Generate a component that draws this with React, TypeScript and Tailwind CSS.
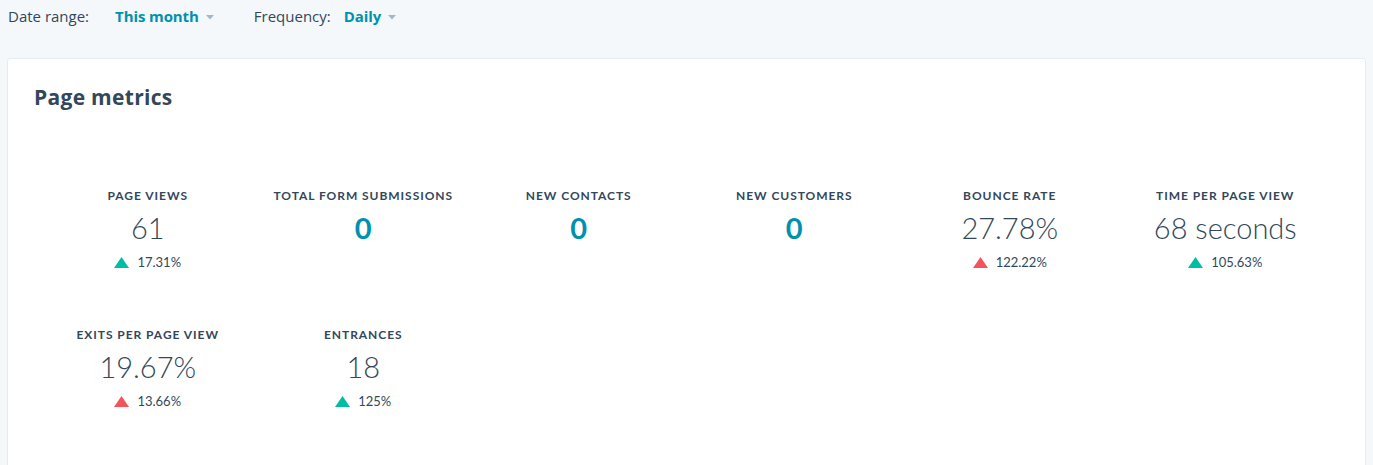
import { ReactNode } from 'react';

type Metric = {
  label: string;
  value: string;
  zero?: boolean;
  change?: string;
  up?: 'good' | 'bad';
};

const metrics: Metric[] = [
  { label: 'Page views', value: '61', change: '17.31%', up: 'good' },
  { label: 'Total form submissions', value: '0', zero: true },
  { label: 'New contacts', value: '0', zero: true },
  { label: 'New customers', value: '0', zero: true },
  { label: 'Bounce rate', value: '27.78%', change: '122.22%', up: 'bad' },
  { label: 'Time per page view', value: '68 seconds', change: '105.63%', up: 'good' },
  { label: 'Exits per page view', value: '19.67%', change: '13.66%', up: 'bad' },
  { label: 'Entrances', value: '18', change: '125%', up: 'good' },
];

function Caret() {
  return (
    <svg width="8" height="5" viewBox="0 0 8 5" className="ml-[7px] mt-[1px]">
      <path d="M0 0h8L4 4.5z" fill="#a6b6c6" />
    </svg>
  );
}

function Filter({ label, value, gap }: { label: string; value: string; gap: string }) {
  return (
    <div className={`flex items-center ${gap}`}>
      <span className="text-[#33475b]">{label}</span>
      <span className="flex items-center font-bold tracking-[-0.1px] text-[#0091ae]">
        {value}
        <Caret />
      </span>
    </div>
  );
}

function Triangle({ color }: { color: string }) {
  return (
    <svg width="15" height="11" viewBox="0 0 15 11" className="mr-[8px]">
      <path d="M7.5 0L15 11H0z" fill={color} />
    </svg>
  );
}

export default function App(): ReactNode {
  return (
    <div className="min-h-[465px] bg-[#f5f8fa] font-['Lato',sans-serif] text-[#33475b]">
      {/* Filters */}
      <div className="flex h-[33px] items-center gap-[40px] pl-[8px] font-['Open_Sans',sans-serif] text-[15px]">
        <Filter label="Date range:" value="This month" gap="gap-[26px]" />
        <Filter label="Frequency:" value="Daily" gap="gap-[13px]" />
      </div>

      {/* Card */}
      <div className="mx-[7px] mt-[25px] h-[420px] rounded-[3px] border border-[#e5ebf1] bg-white px-[32px] pt-[24px]">
        <h2 className="-ml-[6px] font-['Open_Sans',sans-serif] text-[21px] font-bold leading-[28px] tracking-[0.3px] text-[#33475b]">
          Page metrics
        </h2>

        <div className="mt-[77px] grid grid-cols-6 gap-y-[56px]">
          {metrics.map((m) => (
            <div key={m.label} className="flex flex-col items-center">
              <div className="text-[12px] font-bold uppercase leading-[16px] tracking-[0.95px] text-[#33475b]">
                {m.label}
              </div>
              <div
                className={`mt-[6px] text-[29px] leading-[36px] ${
                  m.zero ? 'font-bold text-[#0091ae]' : 'font-light text-[#33475b]'
                }`}
              >
                {m.value}
              </div>
              {m.change && (
                <div className="mt-[7px] flex items-center text-[13px] leading-[18px] text-[#33475b]">
                  <Triangle color={m.up === 'good' ? '#00bda5' : '#f2545b'} />
                  {m.change}
                </div>
              )}
            </div>
          ))}
        </div>
      </div>
    </div>
  );
}
